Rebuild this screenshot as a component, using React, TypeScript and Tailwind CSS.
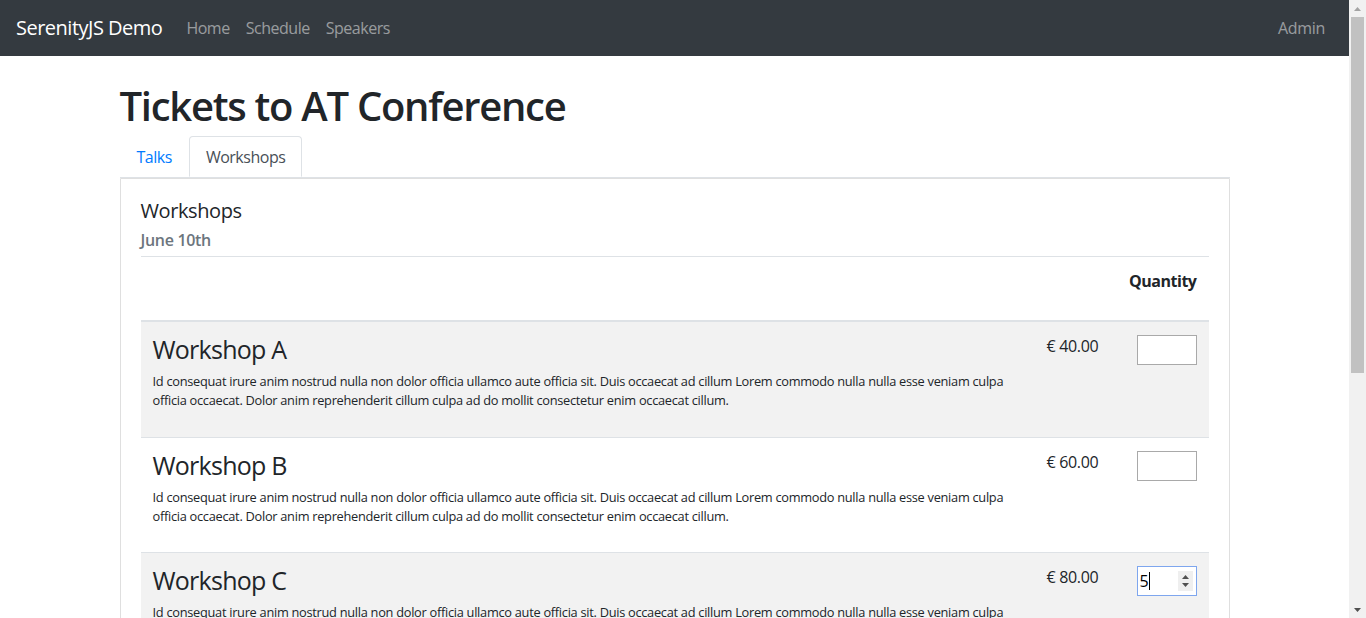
import React from "react";

const desc =
  "Id consequat irure anim nostrud nulla non dolor officia ullamco aute officia sit. Duis occaecat ad cillum Lorem commodo nulla nulla esse veniam culpa officia occaecat. Dolor anim reprehenderit cillum culpa ad do mollit consectetur enim occaecat cillum.";

function Row({
  title,
  price,
  striped,
  first,
  focused,
}: {
  title: string;
  price: string;
  striped?: boolean;
  first?: boolean;
  focused?: boolean;
}) {
  return (
    <div
      className={`grid grid-cols-[894px_74px_100px] h-[115px] shrink-0 ${
        striped ? "bg-[#f2f2f2]" : "bg-white"
      } ${first ? "" : "border-t border-[#dee2e6]"}`}
    >
      <div className="px-3 pt-3">
        <h3 className="text-[25px] leading-[30px] font-medium tracking-[-0.03em] mb-[8px] text-[#212529]">{title}</h3>
        <p className="text-[12.8px] leading-[19.2px] tracking-[-0.022em] text-[#212529]">{desc}</p>
      </div>
      <div className="px-3 pt-3 text-[16px] leading-6 tracking-[-0.02em] whitespace-nowrap">{price}</div>
      <div className="px-3 pt-3 flex justify-end items-start">
        {focused ? (
          <div className="mt-px w-[60px] h-[30px] border border-[#7ea6ee] bg-white flex items-center pl-[2px] pr-[3px]">
            <span className="text-[16px] leading-5 text-black">5</span>
            <span className="w-px h-[18px] bg-black" />
            <div className="ml-auto w-[15px] h-[20px] bg-[#efefef] flex flex-col items-center justify-center gap-[4px]">
              <svg width="7" height="4" viewBox="0 0 7 4">
                <path d="M0 4 L3.5 0 L7 4 Z" fill="#505050" />
              </svg>
              <svg width="7" height="4" viewBox="0 0 7 4">
                <path d="M0 0 L3.5 4 L7 0 Z" fill="#505050" />
              </svg>
            </div>
          </div>
        ) : (
          <div className="mt-px w-[60px] h-[30px] border border-[#a9a9a9] bg-white" />
        )}
      </div>
    </div>
  );
}

export default function App() {
  return (
    <div className="h-[618px] overflow-hidden flex font-['Open_Sans',sans-serif] text-[#212529] bg-white">
      <div className="flex-1 min-w-0 flex flex-col">
        <nav className="h-14 shrink-0 bg-[#343a40] flex items-center px-4">
          <span className="text-white text-[20px] leading-[30px] tracking-[-0.025em] mr-4">SerenityJS Demo</span>
          <span className="px-2 text-[16px] leading-6 tracking-[-0.03em] text-white/50">Home</span>
          <span className="px-2 text-[16px] leading-6 tracking-[-0.03em] text-white/50">Schedule</span>
          <span className="px-2 text-[16px] leading-6 tracking-[-0.03em] text-white/50">Speakers</span>
          <span className="ml-auto px-2 text-[16px] leading-6 tracking-[-0.02em] text-white/50">Admin</span>
        </nav>
        <div className="w-[1110px] mx-auto mt-[26px] flex flex-col">
          <h1 className="text-[40px] leading-[48px] font-semibold tracking-[-0.032em] mb-[6px]">Tickets to AT Conference</h1>
          <div className="flex border-b border-[#dee2e6] h-[42px]">
            <span className="px-4 py-2 text-[16px] leading-6 tracking-[-0.03em] text-[#007bff] border border-transparent">Talks</span>
            <span className="px-4 py-2 text-[16px] leading-6 tracking-[-0.03em] text-[#495057] bg-white border border-[#dee2e6] border-b-white rounded-t">
              Workshops
            </span>
          </div>
          <div className="border border-[#dfdfdf] rounded-b px-5 pt-5 flex flex-col">
            <h5 className="text-[20px] leading-6 font-medium tracking-[-0.02em] mb-3">Workshops</h5>
            <h6 className="text-[16px] leading-[19.2px] font-semibold tracking-[-0.02em] text-[#6c757d] -mt-1">June 10th</h6>
            <div className="mt-[6px] flex flex-col">
              <div className="grid grid-cols-[894px_74px_100px] h-[66px] border-t border-b-2 border-[#dee2e6]">
                <div />
                <div />
                <div className="px-3 pt-3 text-right text-[16px] leading-6 font-bold tracking-[-0.03em]">Quantity</div>
              </div>
              <Row title="Workshop A" price="€ 40.00" striped first />
              <Row title="Workshop B" price="€ 60.00" />
              <Row title="Workshop C" price="€ 80.00" striped focused />
            </div>
          </div>
        </div>
      </div>
      <div className="w-[17px] shrink-0 h-[618px] bg-[#f1f1f1] flex flex-col">
        <div className="h-[17px] flex items-center justify-center">
          <svg width="7" height="4" viewBox="0 0 7 4">
            <path d="M0 4 L3.5 0 L7 4 Z" fill="#a3a3a3" />
          </svg>
        </div>
        <div className="flex-1 flex flex-col">
          <div className="h-[356px] mx-[2px] bg-[#c1c1c1]" />
        </div>
        <div className="h-[17px] flex items-center justify-center">
          <svg width="7" height="4" viewBox="0 0 7 4">
            <path d="M0 0 L3.5 4 L7 0 Z" fill="#505050" />
          </svg>
        </div>
      </div>
    </div>
  );
}
